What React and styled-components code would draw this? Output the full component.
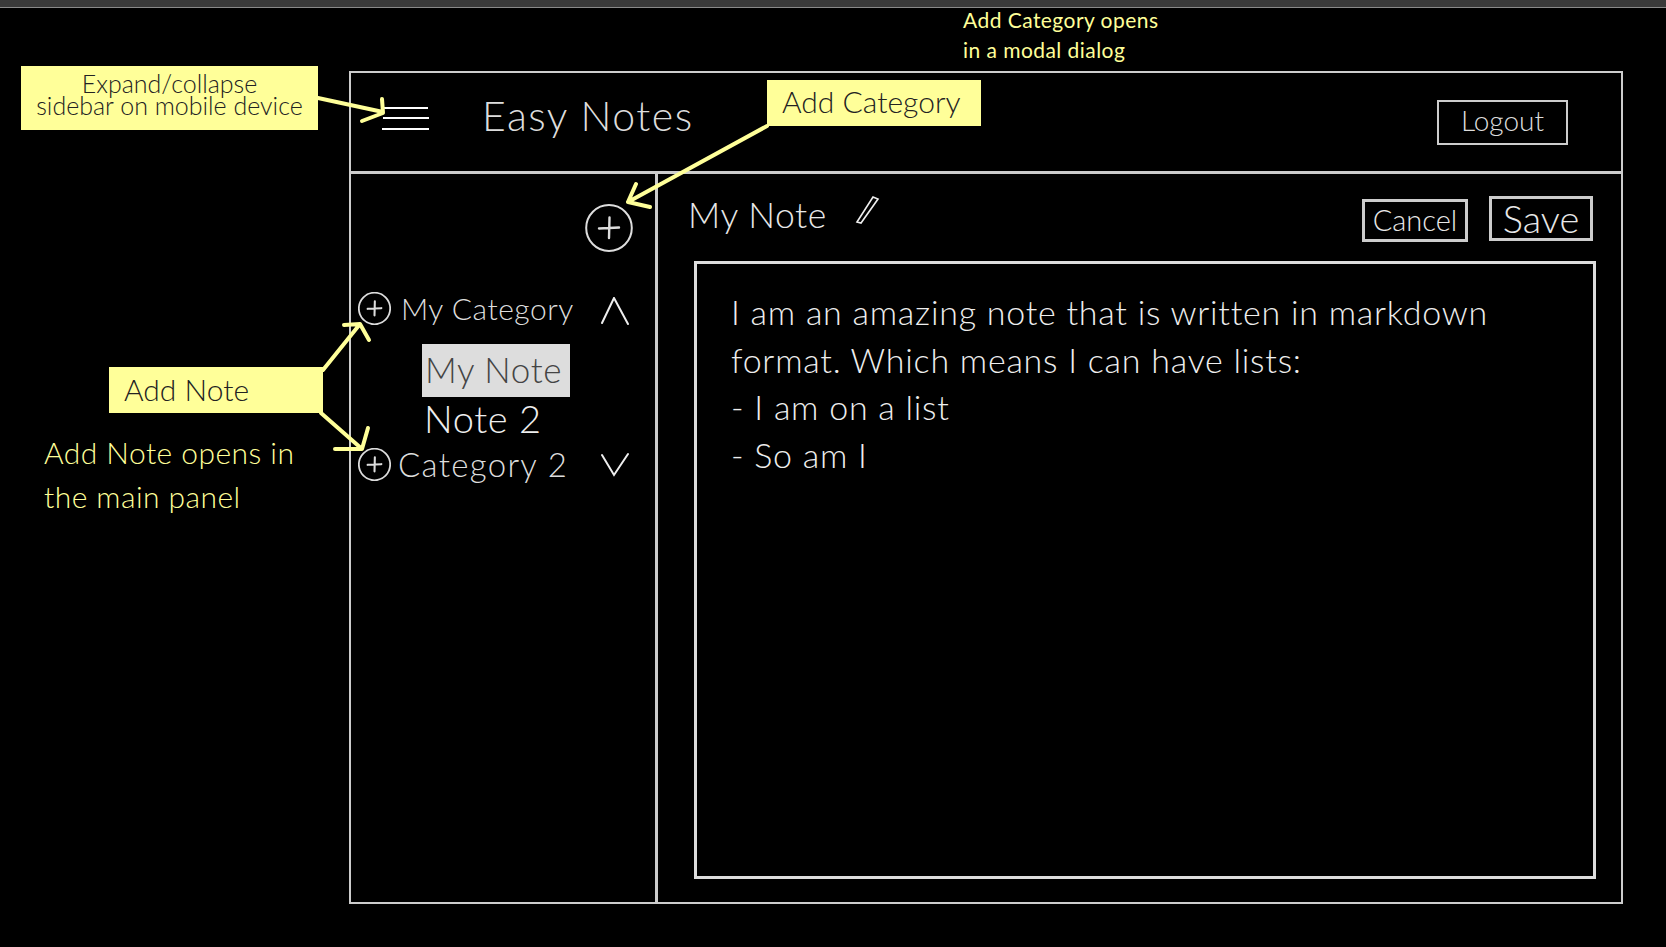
import React from 'react';
import styled, { createGlobalStyle } from 'styled-components';

const GlobalStyle = createGlobalStyle`
  html, body {
    margin: 0;
    background: #000;
  }
  * {
    box-sizing: border-box;
  }
`;

const Page = styled.div`
  position: relative;
  width: 1666px;
  height: 947px;
  overflow: hidden;
  background: #000;
  font-family: Lato, "Noto Sans", sans-serif;
  font-weight: 300;
  color: #eee;
`;

const TitleStrip = styled.div`
  height: 8px;
  background: #3a3a3a;
  border-bottom: 1px solid #8a8a8a;
`;

const Frame = styled.div`
  display: flex;
  flex-direction: column;
  width: 1274px;
  height: 833px;
  margin: 63px 0 0 349px;
  border: 2px solid #ccc;
`;

const Header = styled.header`
  display: flex;
  align-items: center;
  height: 101px;
  flex-shrink: 0;
  padding: 0 53px 8px 31px;
  border-bottom: 3px solid #ccc;
`;

const AppTitle = styled.h1`
  margin: 0 0 6px 53px;
  font-size: 41px;
  font-weight: 300;
  letter-spacing: 1.5px;
  color: #ddd;
`;

const LogoutButton = styled.button`
  width: 131px;
  height: 45px;
  margin-left: auto;
  margin-top: 8px;
  padding: 0 0 4px;
  border: 2px solid #ccc;
  background: none;
  color: #ddd;
  font: 300 28px Lato, sans-serif;
`;

const Body = styled.div`
  display: grid;
  grid-template-columns: 307px 1fr;
  flex: 1;
  min-height: 0;
`;

const Sidebar = styled.aside`
  display: flex;
  flex-direction: column;
  padding: 30px 26px 0 7px;
  border-right: 3px solid #ccc;
`;

const AddCategoryButton = styled.div`
  display: flex;
  justify-content: flex-end;
  margin: 0 -4px 39px 0;
  height: 48px;
`;

const CategoryRow = styled.div`
  display: flex;
  align-items: center;
  height: 34px;
`;

const CategoryName = styled.span`
  flex: 1;
  margin-left: ${(p) => (p.$large ? '7px' : '10px')};
  font-size: ${(p) => (p.$large ? '33px' : '30px')};
  letter-spacing: ${(p) => (p.$large ? '1.3px' : '0.5px')};
  white-space: nowrap;
  color: #ddd;
`;

const NoteList = styled.div`
  display: flex;
  flex-direction: column;
  align-items: flex-start;
  margin: 19px 0 0 64px;
`;

const NoteItem = styled.div`
  display: flex;
  align-items: center;
  width: 148px;
  height: ${(p) => (p.$active ? '53px' : '50px')};
  padding: ${(p) => (p.$active ? '0 0 4px 3px' : '0 0 8px 2px')};
  font-size: ${(p) => (p.$active ? '35px' : '38px')};
  letter-spacing: 0.6px;
  white-space: nowrap;
  background: ${(p) => (p.$active ? '#ddd' : 'transparent')};
  color: ${(p) => (p.$active ? '#444' : '#eee')};
`;

const Main = styled.main`
  display: flex;
  flex-direction: column;
  padding: 22px 25px 23px 30px;
`;

const MainBar = styled.div`
  display: flex;
  align-items: flex-start;
  height: 65px;
  flex-shrink: 0;
`;

const NoteTitle = styled.h2`
  margin: -2px 26px 0 0;
  font-size: 35.5px;
  line-height: 42px;
  font-weight: 300;
  letter-spacing: 0.6px;
  color: #e8e8e8;
`;

const BarActions = styled.div`
  display: flex;
  align-items: flex-start;
  gap: 21px;
  margin-left: auto;
  margin-right: 3px;
`;

const ActionButton = styled.button`
  padding: 0 0 2px;
  border: 3px solid #ccc;
  background: none;
  color: #e8e8e8;
  width: ${(p) => (p.$large ? '104px' : '106px')};
  height: ${(p) => (p.$large ? '45px' : '43px')};
  margin-top: ${(p) => (p.$large ? '0' : '3px')};
  font-family: Lato, sans-serif;
  font-weight: 300;
  font-size: ${(p) => (p.$large ? '38px' : '29px')};
  line-height: 1;
`;

const Editor = styled.div`
  flex: 1;
  margin-left: 6px;
  padding: 24px 0 0 34px;
  border: 3px solid #ddd;
`;

const EditorLine = styled.p`
  margin: 0;
  height: 47.5px;
  line-height: 47.5px;
  font-size: 34px;
  letter-spacing: 0.75px;
  white-space: nowrap;
  color: #eee;
`;

const StickyNote = styled.div`
  position: absolute;
  left: ${(p) => p.$left}px;
  top: ${(p) => p.$top}px;
  width: ${(p) => p.$width}px;
  height: ${(p) => p.$height}px;
  padding-left: ${(p) => p.$pad || 0}px;
  padding-bottom: ${(p) => p.$lift || 0}px;
  display: flex;
  flex-direction: column;
  justify-content: center;
  align-items: ${(p) => (p.$pad ? 'flex-start' : 'center')};
  background: #ffff99;
  color: #222;
  font-size: ${(p) => p.$size}px;
  line-height: ${(p) => p.$lineHeight || 1.2};
  font-weight: 300;
  white-space: nowrap;
`;

const Remark = styled.div`
  position: absolute;
  left: ${(p) => p.$left}px;
  top: ${(p) => p.$top}px;
  color: #ffff99;
  font-size: ${(p) => p.$size}px;
  font-weight: ${(p) => p.$weight};
  line-height: ${(p) => p.$lineHeight}px;
  letter-spacing: ${(p) => p.$spacing}px;
  white-space: nowrap;
`;

const ArrowLayer = styled.svg`
  position: absolute;
  left: 0;
  top: 0;
  pointer-events: none;
`;

const ChevronSvg = styled.svg`
  margin-top: ${(p) => (p.$up ? '6px' : '0')};
`;

const PlusIcon = ({ size }) => (
  <svg width={size} height={size} viewBox="0 0 48 48" fill="none" stroke="#ddd">
    <ellipse cx="24" cy="24" rx="22.8" ry="23" strokeWidth={size > 40 ? 2 : 2.6} />
    <path d="M24.5 13.5 L24 34 M14 24.5 L34 23.5" strokeWidth={size > 40 ? 2.4 : 3} strokeLinecap="round" />
  </svg>
);

const Chevron = ({ up }) => (
  <ChevronSvg $up={up} width="28" height="28" viewBox="0 0 28 28" fill="none" stroke="#eee" strokeWidth="2" strokeLinecap="round">
    {up ? <path d="M1 26 L13 1 L27 27" /> : <path d="M1 5 L13 25 L27 4" />}
  </ChevronSvg>
);

const Hamburger = () => (
  <svg width="47" height="25" viewBox="0 0 47 25" fill="none" stroke="#fff" strokeWidth="2">
    <path d="M1 2 H46 M1 12 H47 M0 23 H47" />
  </svg>
);

const Pencil = () => (
  <svg width="28" height="28" viewBox="0 0 28 28" fill="none" stroke="#eee" strokeWidth="1.6">
    <path d="M4 26 L20 1 L25 3 L8 27 Z" />
  </svg>
);

const Arrows = () => (
  <ArrowLayer width="1666" height="947" viewBox="0 0 1666 947" fill="none" stroke="#ffff99" strokeWidth="4" strokeLinecap="round" strokeLinejoin="round">
    <path d="M318 98 L383 112 M382 99 L383 113 L362 121" />
    <path d="M767 126 L628 202 M636 184 L628 202 L650 207" />
    <path d="M323 370 L360 324 M344 325 L360 324 L369 340" />
    <path d="M321 413 L362 449 M368 428 L362 449 L335 449" />
  </ArrowLayer>
);

const App = () => {
  return (
    <Page>
      <GlobalStyle />
      <TitleStrip />
      <Frame>
        <Header>
          <Hamburger />
          <AppTitle>Easy Notes</AppTitle>
          <LogoutButton>Logout</LogoutButton>
        </Header>
        <Body>
          <Sidebar>
            <AddCategoryButton>
              <PlusIcon size={48} />
            </AddCategoryButton>
            <CategoryRow>
              <PlusIcon size={33} />
              <CategoryName>My Category</CategoryName>
              <Chevron up />
            </CategoryRow>
            <NoteList>
              <NoteItem $active>My Note</NoteItem>
              <NoteItem>Note 2</NoteItem>
            </NoteList>
            <CategoryRow>
              <PlusIcon size={33} />
              <CategoryName $large>Category 2</CategoryName>
              <Chevron />
            </CategoryRow>
          </Sidebar>
          <Main>
            <MainBar>
              <NoteTitle>My Note</NoteTitle>
              <Pencil />
              <BarActions>
                <ActionButton>Cancel</ActionButton>
                <ActionButton $large>Save</ActionButton>
              </BarActions>
            </MainBar>
            <Editor>
              <EditorLine>I am an amazing note that is written in markdown</EditorLine>
              <EditorLine>format. Which means I can have lists:</EditorLine>
              <EditorLine>- I am on a list</EditorLine>
              <EditorLine>- So am I</EditorLine>
            </Editor>
          </Main>
        </Body>
      </Frame>

      <Arrows />
      <StickyNote $left={21} $top={66} $width={297} $height={64} $size={25} $lineHeight={0.9} $lift={8}>
        <span>Expand/collapse</span>
        <span>sidebar on mobile device</span>
      </StickyNote>
      <StickyNote $left={767} $top={80} $width={214} $height={46} $size={30} $pad={15} $lift={4}>
        Add Category
      </StickyNote>
      <StickyNote $left={109} $top={367} $width={214} $height={46} $size={30} $pad={15} $lift={3}>
        Add Note
      </StickyNote>
      <Remark $left={963} $top={5} $size={21} $weight={400} $lineHeight={30} $spacing={0.45}>
        Add Category opens
        <br />
        in a modal dialog
      </Remark>
      <Remark $left={44} $top={430} $size={30} $weight={300} $lineHeight={44} $spacing={0.45}>
        Add Note opens in
        <br />
        the main panel
      </Remark>
    </Page>
  );
};

export default App;
